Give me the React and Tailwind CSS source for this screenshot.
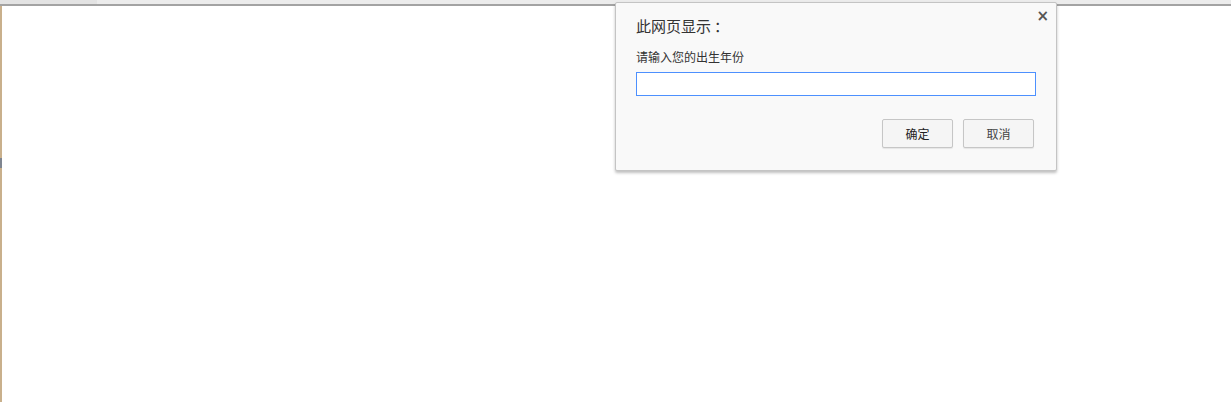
export default function App() {
  return (
    <div className="relative w-[1231px] h-[402px] bg-white overflow-hidden font-['Noto_Sans_CJK_SC','Noto_Sans',sans-serif]">
      <div className="flex h-[4px]">
        <div className="w-[97px] bg-[#e3e3e3]"></div>
        <div className="flex-1 bg-[#ececec]"></div>
      </div>
      <div className="h-[2px] bg-[#a3a3a3]"></div>
      <div className="flex h-[396px]">
        <div className="w-[2px] flex flex-col bg-[#c9b08c]">
          <div className="h-[152px]"></div>
          <div className="h-[10px] bg-[#7f8590]"></div>
        </div>
        <div className="flex-1 bg-white"></div>
      </div>

      <div className="absolute left-[615px] top-[2px] w-[442px] h-[169px] bg-[#f9f9f9] border border-[#c4c4c4] rounded-[2px] shadow-[0_2px_3px_rgba(0,0,0,0.25)] pl-[20px] pr-[21px]">
        <button className="absolute right-[7px] top-[6px] text-[#555] text-[15px] leading-none font-bold font-['DejaVu_Sans',sans-serif]">
          ×
        </button>
        <div className="pt-[12px] text-[15px] leading-[22px] text-[#333]">
          此网页显示<span className="ml-[3px]">：</span>
        </div>
        <div className="mt-[12px] text-[12px] leading-[16px] text-[#333]">请输入您的出生年份</div>
        <input
          className="mt-[7px] block w-[400px] h-[24px] bg-white border border-[#4d90fe] outline-none px-1 text-[12px]"
          defaultValue=""
        />
        <div className="mt-[23px] flex justify-end gap-[10px] pr-[1px]">
          <button className="w-[71px] h-[29px] bg-[#f5f5f5] border border-[#c6c6c6] rounded-[2px] text-[12px] text-[#222] shadow-[0_1px_1px_rgba(0,0,0,0.08)]">
            确定
          </button>
          <button className="w-[71px] h-[29px] bg-[#f5f5f5] border border-[#c6c6c6] rounded-[2px] text-[12px] text-[#444] shadow-[0_1px_1px_rgba(0,0,0,0.08)]">
            取消
          </button>
        </div>
      </div>
    </div>
  );
}
